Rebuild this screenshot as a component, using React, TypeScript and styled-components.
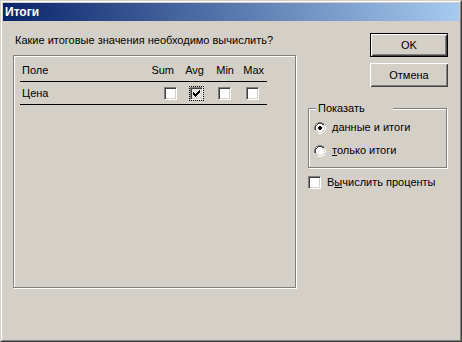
import styled, { createGlobalStyle } from 'styled-components';

const GlobalStyle = createGlobalStyle`
  html, body {
    margin: 0;
    padding: 0;
    overflow: hidden;
    background: #d4d0c8;
  }
  * {
    box-sizing: border-box;
  }
`;

const face = '#d4d0c8';

const StWindow = styled.div`
  width: 462px;
  height: 342px;
  background: ${face};
  border-style: solid;
  border-width: 1px;
  border-color: ${face} #404040 #404040 ${face};
  font-family: 'Liberation Sans', Arial, sans-serif;
  font-size: 11px;
  line-height: 13px;
  color: #000;
`;

const StFrame = styled.div`
  height: 100%;
  padding: 1px;
  border-style: solid;
  border-width: 1px;
  border-color: #fff #808080 #808080 #fff;
  display: flex;
  flex-direction: column;
`;

const StTitleBar = styled.div`
  height: 18px;
  display: flex;
  align-items: center;
  padding-left: 2px;
  background: linear-gradient(to right, #0a246a, #a6caf0);
  color: #fff;
  font-size: 12px;
  font-weight: bold;
`;

const StBody = styled.div`
  flex: 1;
  display: flex;
  gap: 10px;
  padding: 0 0 0 10px;
`;

const StLeft = styled.div`
  width: 285px;
  display: flex;
  flex-direction: column;
`;

const StPrompt = styled.div`
  margin: 13px 0 0 2px;
`;

const StPanel = styled.div`
  margin-top: 8px;
  width: 283px;
  height: 233px;
  border: 1px solid #808080;
  box-shadow: inset 1px 1px #fff, 1px 1px #fff;
  padding: 0 28px 0 6px;
`;

const StGrid = styled.div`
  display: grid;
  grid-template-columns: 1fr repeat(4, 30px);
`;

const StHeadCell = styled.div<{ $first?: boolean }>`
  padding: 8px ${(p) => (p.$first ? '0' : '3px')} 4px ${(p) => (p.$first ? '2px' : '0')};
  text-align: ${(p) => (p.$first ? 'left' : 'right')};
  border-bottom: 1px solid #000;
`;

const StRowCell = styled.div<{ $first?: boolean; $inset?: number }>`
  height: 23px;
  display: flex;
  align-items: center;
  justify-content: ${(p) => (p.$first ? 'flex-start' : 'flex-end')};
  padding-left: ${(p) => (p.$first ? '2px' : '0')};
  padding-right: ${(p) => p.$inset ?? 0}px;
  border-bottom: 1px solid #000;
`;

const StCheckBox = styled.span<{ $focus?: boolean }>`
  position: relative;
  display: inline-block;
  width: 13px;
  height: 13px;
  flex: none;
  border-style: solid;
  border-width: 1px;
  border-color: #808080 #fff #fff #808080;
  box-shadow: inset 1px 1px #404040, inset -1px -1px ${face};
  background: ${(p) =>
    p.$focus
      ? 'repeating-conic-gradient(#ffffff 0 25%, #d4d0c8 0 50%) 0 0 / 2px 2px'
      : '#fff'};
  outline: ${(p) => (p.$focus ? '1px dotted #000' : 'none')};
`;

const CheckMark = () => (
  <svg
    width="7"
    height="7"
    viewBox="0 0 7 7"
    style={{ position: 'absolute', left: 2, top: 2 }}
  >
    <path d="M0 2h1v1h1v1h1v-1h1v-1h1v-1h1v-1h1v3h-1v1h-1v1h-1v1h-1v1h-1v-1h-1v-1h-1z" fill="#000" />
  </svg>
);

const StRight = styled.div`
  width: 140px;
  display: flex;
  flex-direction: column;
`;

const StButtons = styled.div`
  margin-top: 12px;
  display: flex;
  flex-direction: column;
  align-items: flex-end;
  gap: 6px;
`;

const StButton = styled.button<{ $default?: boolean }>`
  width: 78px;
  height: 24px;
  margin: 0;
  padding: 0;
  font: inherit;
  color: #000;
  background: ${face};
  border: ${(p) => (p.$default ? '1px solid #000' : 'none')};
  box-shadow: inset 1px 1px #fff, inset -1px -1px #404040, inset 2px 2px ${face},
    inset -2px -2px #808080;
`;

const StGroup = styled.fieldset`
  margin: 15px 0 0;
  padding: 6px 0 10px 5px;
  width: 139px;
  border: 1px solid #808080;
  box-shadow: inset 1px 1px #fff, 1px 1px #fff;
  display: flex;
  flex-direction: column;
  gap: 10px;
`;

const StLegend = styled.legend`
  width: 77px;
  margin-left: 2px;
  padding: 0 0 0 2px;
  background: ${face};
`;

const StOption = styled.label`
  display: flex;
  align-items: center;
  gap: 6px;
`;

const Radio = ({ checked }: { checked?: boolean }) => (
  <svg width="12" height="12" viewBox="0 0 12 12" style={{ flex: 'none' }}>
    <path d="M4 0h4v1h2v1h-2v-1h-4v1h-2v2h-1v4h-1v-4h1v-2h1v-1h2z" fill="#808080" />
    <path d="M4 1h4v1h2v1h-2v-1h-4v1h-1v1h-1v4h-1v-4h1v-1h1v-1h1z" fill="#404040" />
    <path d="M11 4h1v4h-1v2h-1v1h-2v1h-4v-1h4v-1h2v-2h1z" fill="#fff" />
    <path d="M10 4h1v4h-1v2h-2v1h-4v-1h4v-1h1v-1h1z" fill={face} />
    <path d="M4 2h4v1h1v1h1v4h-1v1h-1v1h-4v-1h-1v-1h-1v-4h1v-1h1z" fill="#fff" />
    {checked && <path d="M5 4h2v1h1v2h-1v1h-2v-1h-1v-2h1z" fill="#000" />}
  </svg>
);

const StPercent = styled.label`
  margin-top: 8px;
  display: flex;
  align-items: center;
  gap: 6px;
`;

const columns = [
  { name: 'Sum', inset: 0, checked: false },
  { name: 'Avg', inset: 4, checked: true },
  { name: 'Min', inset: 6, checked: false },
  { name: 'Max', inset: 8, checked: false },
];

export default function App() {
  return (
    <>
      <GlobalStyle />
      <StWindow>
        <StFrame>
          <StTitleBar>Итоги</StTitleBar>
          <StBody>
            <StLeft>
              <StPrompt>Какие итоговые значения необходимо вычислить?</StPrompt>
              <StPanel>
                <StGrid>
                  <StHeadCell $first>Поле</StHeadCell>
                  {columns.map((c) => (
                    <StHeadCell key={c.name}>{c.name}</StHeadCell>
                  ))}
                  <StRowCell $first>Цена</StRowCell>
                  {columns.map((c) => (
                    <StRowCell key={c.name} $inset={c.inset}>
                      <StCheckBox $focus={c.checked}>
                        {c.checked && <CheckMark />}
                      </StCheckBox>
                    </StRowCell>
                  ))}
                </StGrid>
              </StPanel>
            </StLeft>
            <StRight>
              <StButtons>
                <StButton $default>OK</StButton>
                <StButton>Отмена</StButton>
              </StButtons>
              <StGroup>
                <StLegend>Показать</StLegend>
                <StOption>
                  <Radio checked />
                  <span>
                    <u>д</u>анные и итоги
                  </span>
                </StOption>
                <StOption>
                  <Radio />
                  <span>
                    <u>т</u>олько итоги
                  </span>
                </StOption>
              </StGroup>
              <StPercent>
                <StCheckBox />
                <span>
                  В<u>ы</u>числить проценты
                </span>
              </StPercent>
            </StRight>
          </StBody>
        </StFrame>
      </StWindow>
    </>
  );
}
